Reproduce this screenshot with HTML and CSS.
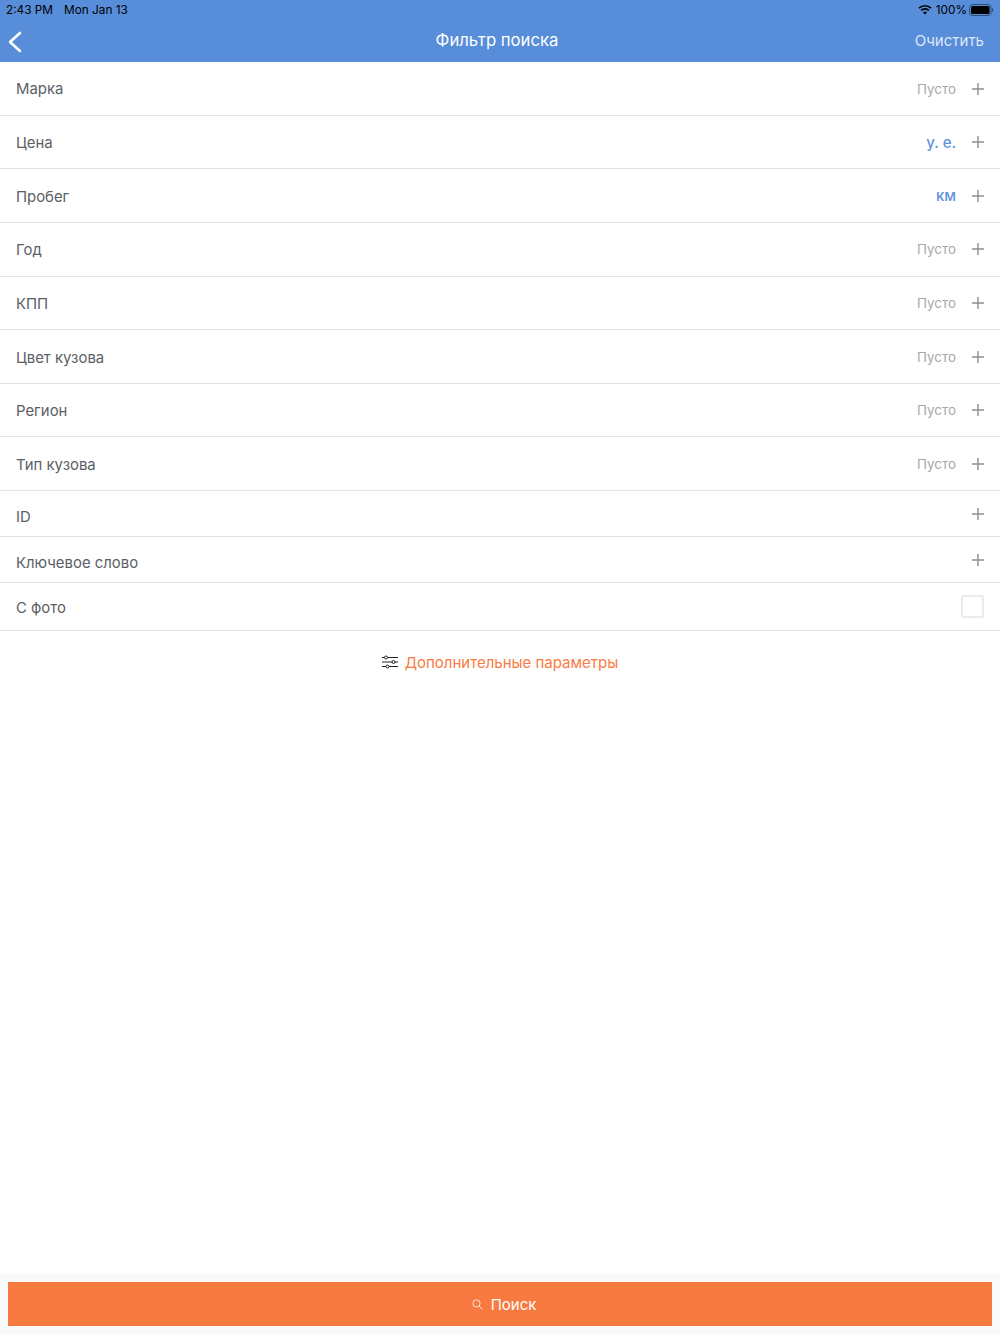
FILE: index.html
```html
<!DOCTYPE html>
<html lang="ru">
<head>
<meta charset="utf-8">
<title>Фильтр поиска</title>
<link rel="stylesheet" href="styles.css">
</head>
<body>
<div class="page">
  <header class="header">
    <div class="status">
      <div class="status-left"><span>2:43 PM</span><span>Mon Jan 13</span></div>
      <div class="status-right">
        <svg class="wifi" width="14" height="11" viewBox="0 0 14 11"><path d="M1 4.2a8.6 8.6 0 0 1 12 0" fill="none" stroke="#000" stroke-width="1.7"/><path d="M3.2 6.4a5.4 5.4 0 0 1 7.6 0" fill="none" stroke="#000" stroke-width="1.7"/><path d="M5 8.4 7 10.5 9 8.4a2.8 2.8 0 0 0-4 0z" fill="#000"/></svg>
        <span>100%</span>
        <svg class="battery" width="25" height="12" viewBox="0 0 25 12"><rect x=".5" y=".5" width="21.5" height="11" rx="3" fill="none" stroke="#000" stroke-opacity=".45"/><rect x="2" y="2" width="18.5" height="8" rx="1.6" fill="#000"/><path d="M23 4v4c.8-.3 1.3-1 1.3-2s-.5-1.7-1.3-2z" fill="#000" fill-opacity=".45"/></svg>
      </div>
    </div>
    <nav class="nav">
      <svg class="back" width="14" height="22" viewBox="0 0 14 22"><path d="M12 2 2 11l10 9" fill="none" stroke="#fff" stroke-width="2.6" stroke-linecap="round" stroke-linejoin="round"/></svg>
      <div class="title">Фильтр поиска</div>
      <div class="clear">Очистить</div>
    </nav>
  </header>

  <main class="list">
    <div class="row"><span class="label first">Марка</span><span class="value">Пусто</span><svg class="plus" viewBox="0 0 12 12"><path d="M6 0v12M0 6h12"/></svg></div>
    <div class="row"><span class="label">Цена</span><span class="value accent">у. е.</span><svg class="plus" viewBox="0 0 12 12"><path d="M6 0v12M0 6h12"/></svg></div>
    <div class="row"><span class="label">Пробег</span><span class="value accent">км</span><svg class="plus" viewBox="0 0 12 12"><path d="M6 0v12M0 6h12"/></svg></div>
    <div class="row"><span class="label">Год</span><span class="value">Пусто</span><svg class="plus" viewBox="0 0 12 12"><path d="M6 0v12M0 6h12"/></svg></div>
    <div class="row"><span class="label">КПП</span><span class="value">Пусто</span><svg class="plus" viewBox="0 0 12 12"><path d="M6 0v12M0 6h12"/></svg></div>
    <div class="row"><span class="label">Цвет кузова</span><span class="value">Пусто</span><svg class="plus" viewBox="0 0 12 12"><path d="M6 0v12M0 6h12"/></svg></div>
    <div class="row"><span class="label">Регион</span><span class="value">Пусто</span><svg class="plus" viewBox="0 0 12 12"><path d="M6 0v12M0 6h12"/></svg></div>
    <div class="row"><span class="label">Тип кузова</span><span class="value">Пусто</span><svg class="plus" viewBox="0 0 12 12"><path d="M6 0v12M0 6h12"/></svg></div>
    <div class="row short"><span class="label low">ID</span><svg class="plus" viewBox="0 0 12 12"><path d="M6 0v12M0 6h12"/></svg></div>
    <div class="row short"><span class="label low">Ключевое слово</span><svg class="plus" viewBox="0 0 12 12"><path d="M6 0v12M0 6h12"/></svg></div>
    <div class="row check"><span class="label">С фото</span><span class="checkbox"></span></div>
    <div class="more">
      <svg class="sliders" width="16" height="14" viewBox="0 0 16 14"><g fill="#fff" stroke="#222" stroke-width="1"><path d="M0 2.5h16M0 7h16M0 11.5h16" fill="none"/><circle cx="4" cy="2.5" r="1.5"/><circle cx="11.5" cy="7" r="1.5"/><circle cx="5.5" cy="11.5" r="1.5"/></g></svg>
      <span>Дополнительные параметры</span>
    </div>
  </main>

  <footer class="footer">
    <button class="search">
      <svg width="11" height="11" viewBox="0 0 11 11"><circle cx="4.5" cy="4.5" r="3.6" fill="none" stroke="#fff" stroke-opacity=".8"/><path d="M7.2 7.2 10.4 10.4" stroke="#fff" stroke-opacity=".8"/></svg>
      <span>Поиск</span>
    </button>
  </footer>
</div>
</body>
</html>
```

FILE: styles.css
```css
* { box-sizing: border-box; }
html, body { margin: 0; padding: 0; }
body {
  font-family: Inter, "Noto Sans", "Liberation Sans", sans-serif;
  background: #fff;
}
.page {
  width: 1000px;
  height: 1334px;
  display: flex;
  flex-direction: column;
  overflow: hidden;
}
.header {
  height: 62.3px;
  background: #578dd9;
  flex: none;
}
.status {
  height: 20px;
  padding: 0 6px 1px;
  display: flex;
  justify-content: space-between;
  align-items: center;
  font-size: 11.8px;
  color: #000;
}
.status-left { display: flex; gap: 11px; }
.status-right { display: flex; align-items: center; gap: 4px; }
.battery { margin-left: -2px; }
.nav {
  position: relative;
  height: 42px;
  display: flex;
  align-items: center;
  justify-content: space-between;
  padding: 0 16px 2px 8px;
  color: #fff;
}
.back { margin-top: 3px; }
.title {
  position: absolute;
  left: 0;
  right: 6px;
  text-align: center;
  font-size: 16.7px;
  pointer-events: none;
}
.clear { font-size: 15px; color: #dce8f8; }
.list { flex: 1; }
.row {
  height: 53.6px;
  display: flex;
  align-items: center;
  padding: 0 16px;
  border-bottom: 1px solid #e3e3e3;
}
.row.short { height: 46px; }
.row.check { height: 48px; }
.label {
  flex: 1;
  font-size: 14.9px;
  color: #5c6066;
  padding-top: 2px;
}
.label.first { padding-top: 0; }
.label.low { padding-top: 6px; }
.value {
  font-size: 13.4px;
  color: #a8a8a8;
  margin-right: 16px;
}
.value.accent { color: #5e92dc; font-size: 15px; font-weight: 500; }
.plus {
  width: 12px;
  height: 12px;
  flex: none;
  fill: none;
  stroke: #8f8f8f;
  stroke-width: 1.4;
}
.checkbox {
  width: 23px;
  height: 23px;
  border: 2px solid #e8ebf0;
  border-radius: 2px;
  flex: none;
}
.more {
  height: 62px;
  display: flex;
  align-items: center;
  justify-content: center;
  gap: 7px;
  font-size: 15px;
  color: #f97b44;
}
.footer {
  flex: none;
  height: 60px;
  padding: 8px;
  background: #f8f9fb;
}
.search {
  width: 100%;
  height: 44px;
  border: 0;
  padding: 0 0 0 8px;
  background: #f87a40;
  color: #fff;
  font: inherit;
  font-size: 15px;
  display: flex;
  align-items: center;
  justify-content: center;
  gap: 8px;
}
```
